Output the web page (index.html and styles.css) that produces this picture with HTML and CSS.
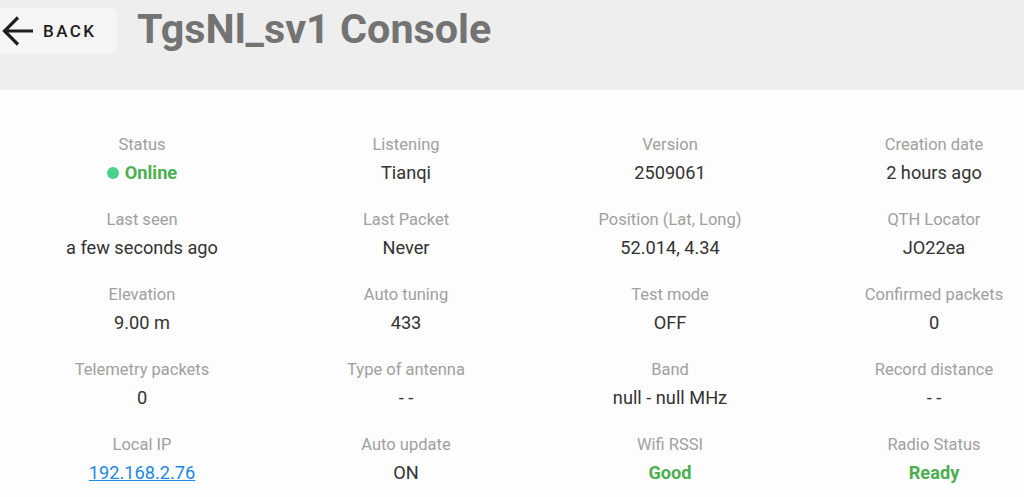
FILE: index.html
```html
<!DOCTYPE html>
<html>
<head>
<meta charset="utf-8">
<link rel="stylesheet" href="styles.css">
</head>
<body>
<header class="top">
  <button class="back">
    <svg class="back-icon" width="36" height="36" viewBox="0 0 36 36"><path d="M33 18H5M18 4.5L4.5 18L18 31.5" fill="none" stroke="#1f1f1f" stroke-width="3.2"/></svg>
    <span class="back-text">BACK</span>
  </button>
  <h1 class="title">TgsNl_sv1 Console</h1>
</header>
<main class="grid">
  <div class="item"><div class="label">Status</div><div class="value online"><span class="dot"></span>Online</div></div>
  <div class="item"><div class="label">Listening</div><div class="value">Tianqi</div></div>
  <div class="item"><div class="label">Version</div><div class="value">2509061</div></div>
  <div class="item"><div class="label">Creation date</div><div class="value">2 hours ago</div></div>

  <div class="item"><div class="label">Last seen</div><div class="value">a few seconds ago</div></div>
  <div class="item"><div class="label">Last Packet</div><div class="value">Never</div></div>
  <div class="item"><div class="label">Position (Lat, Long)</div><div class="value">52.014, 4.34</div></div>
  <div class="item"><div class="label">QTH Locator</div><div class="value">JO22ea</div></div>

  <div class="item"><div class="label">Elevation</div><div class="value">9.00 m</div></div>
  <div class="item"><div class="label">Auto tuning</div><div class="value">433</div></div>
  <div class="item"><div class="label">Test mode</div><div class="value">OFF</div></div>
  <div class="item"><div class="label">Confirmed packets</div><div class="value">0</div></div>

  <div class="item"><div class="label">Telemetry packets</div><div class="value">0</div></div>
  <div class="item"><div class="label">Type of antenna</div><div class="value">- -</div></div>
  <div class="item"><div class="label">Band</div><div class="value">null - null MHz</div></div>
  <div class="item"><div class="label">Record distance</div><div class="value">- -</div></div>

  <div class="item"><div class="label">Local IP</div><div class="value"><a class="link" href="#">192.168.2.76</a></div></div>
  <div class="item"><div class="label">Auto update</div><div class="value">ON</div></div>
  <div class="item"><div class="label">Wifi RSSI</div><div class="value good">Good</div></div>
  <div class="item"><div class="label">Radio Status</div><div class="value good">Ready</div></div>
</main>
</body>
</html>
```
FILE: styles.css
```css
html, body {
  margin: 0;
  padding: 0;
  overflow: hidden;
}
body {
  background: #fdfdfd;
  font-family: Roboto, "Liberation Sans", Arial, sans-serif;
  width: 1024px;
  height: 497px;
}
.top {
  background: #eeeeee;
  height: 90px;
  border-bottom: 1px solid #f4f4f4;
  display: flex;
  align-items: flex-start;
  padding-top: 8px;
  box-sizing: border-box;
}
.back {
  display: flex;
  align-items: center;
  width: 117px;
  height: 46px;
  padding: 0;
  background: #f5f5f5;
  border: none;
  border-radius: 0 6px 6px 0;
  font-family: inherit;
  cursor: pointer;
}
.back-icon {
  display: block;
}
.back-text {
  margin-left: 7px;
  font-size: 17px;
  font-weight: 500;
  letter-spacing: 2.4px;
  color: #1f1f1f;
}
.title {
  margin: 0 0 0 20px;
  font-size: 41.3px;
  line-height: 42px;
  font-weight: 700;
  color: #737373;
}
.grid {
  margin-left: 10px;
  width: 1056px;
  padding-top: 43px;
  display: grid;
  grid-template-columns: repeat(4, 264px);
}
.item {
  height: 75px;
  text-align: center;
}
.label {
  font-size: 16.5px;
  line-height: 24px;
  color: #a0a0a0;
}
.value {
  font-size: 18.2px;
  line-height: 32px;
  color: #333333;
  display: flex;
  align-items: center;
  justify-content: center;
}
.online, .good {
  color: #4caf50;
  font-weight: 700;
}
.dot {
  width: 12px;
  height: 12px;
  border-radius: 50%;
  background: #47d18b;
  margin-right: 6px;
}
.link {
  color: #1e88e5;
  text-decoration: underline;
}
```
